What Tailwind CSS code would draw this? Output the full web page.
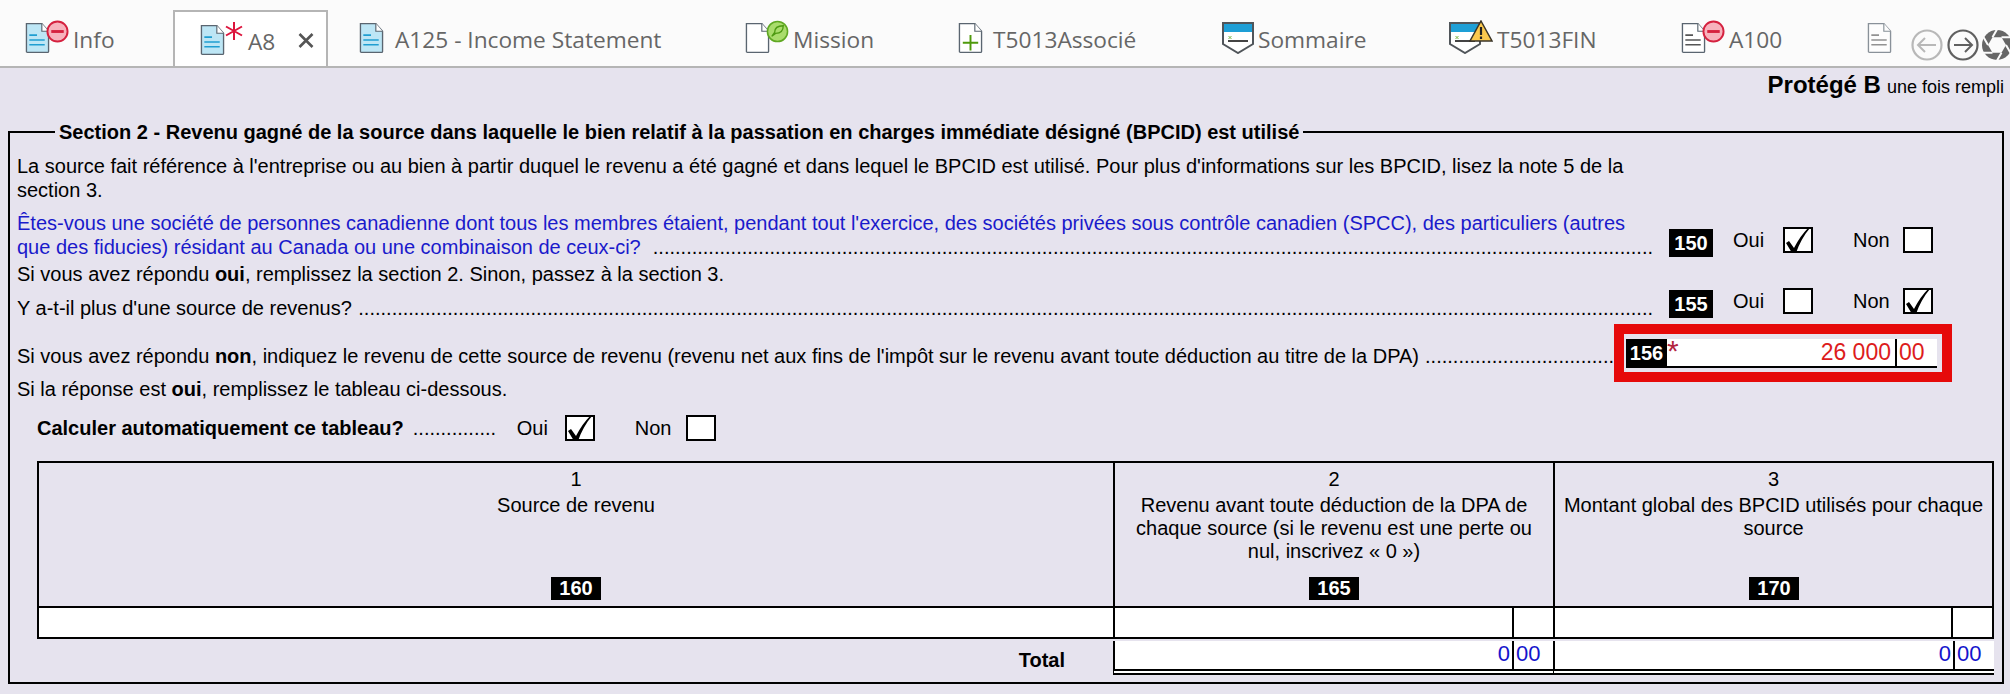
<!DOCTYPE html>
<html lang="fr">
<head>
  <meta charset="UTF-8" />
  <title>A8</title>
  <script src="https://cdn.jsdelivr.net/npm/@tailwindcss/browser@4"></script>
</head>
<body class="w-[2010px] h-[694px] overflow-hidden bg-[#e6e3ee] text-black font-['Liberation_Sans',Arial,sans-serif] text-[20px] leading-[24px]">

  <svg class="hidden">
    <defs>
      <symbol id="doc" viewBox="0 0 26 32">
        <path d="M1.5 1h16l7 8v21a1 1 0 0 1-1 1h-21a1 1 0 0 1-1-1z" fill="currentColor" stroke="#5a6570" stroke-width="1.4"/>
        <path d="M17.5 1v8h7" fill="#fff" stroke="#5a6570" stroke-width="1.2"/>
      </symbol>
      <symbol id="lines" viewBox="0 0 26 32">
        <path d="M4.500 13h8M4.500 18h16M4.500 23h16" fill="none" stroke="currentColor" stroke-width="1.600"/>
      </symbol>
      <symbol id="stop" viewBox="0 0 24 24">
        <circle cx="12" cy="12" r="10.500" fill="#f7b2bd" stroke="#d5213f" stroke-width="2"/>
        <rect x="5.500" y="10.500" width="13" height="3" fill="#d5213f"/>
      </symbol>
      <symbol id="shield" viewBox="0 0 32 32">
        <path d="M1 1h30v21l-15 9-15-9z" fill="#fff" stroke="#50555a" stroke-width="2"/>
        <rect x="2" y="2" width="28" height="8" fill="#1e9fd6"/>
        <path d="M6 19h20" stroke="#444" stroke-width="2"/>
        <path d="M6.500 14l3 3M9.500 14l-3 3" stroke="#7ab648" stroke-width="1"/>
      </symbol>
      <symbol id="check" viewBox="0 0 30 26">
        <path d="M3 16l3-2 5 7C15 13 20 6 26 0l1 1C21 8 16 17 13 26H9z" fill="#000"/>
      </symbol>
    </defs>
  </svg>

  <!-- Tabs -->
  <header class="h-[68px] flex items-stretch bg-[#fbfbfb] border-b-2 border-[#b5b5b5] font-['Open_Sans',sans-serif] text-[22.7px] text-[#666] relative overflow-hidden">
    <div class="w-[173px] pl-[25px] flex items-center pt-[10px]">
      <span class="relative w-[25px] h-[32px] block">
        <svg class="w-[25px] h-[32px] text-[#bde6f5] absolute"><use href="#doc"/></svg>
        <svg class="w-[25px] h-[32px] text-[#1f9ed1] absolute"><use href="#lines"/></svg>
        <svg class="w-[23px] h-[23px] absolute left-[21px] top-[-2px]"><use href="#stop"/></svg>
      </span>
      <span class="ml-[23px] pt-[3px]">Info</span>
    </div>
    <div class="w-[155px] h-[58px] mt-[10px] mb-[-2px] pl-[25px] flex items-center bg-white border-2 border-b-0 border-[#b5b5b5] z-10">
      <span class="relative w-[25px] h-[32px] block">
        <svg class="w-[25px] h-[32px] text-[#bde6f5] absolute"><use href="#doc"/></svg>
        <svg class="w-[25px] h-[32px] text-[#1f9ed1] absolute"><use href="#lines"/></svg>
        <svg class="w-[18px] h-[18px] absolute left-[25px] top-[-2px]" viewBox="0 0 18 18"><path d="M9 0v18M1 4.500l16 9M17 4.500l-16 9" stroke="#dc143c" stroke-width="2"/></svg>
      </span>
      <span class="ml-[23px] pt-[3px]">A8</span>
      <svg class="w-[16px] h-[15px] ml-[23px]" viewBox="0 0 16 15"><path d="M1.500 1l13 13M14.500 1l-13 13" stroke="#555" stroke-width="2.600"/></svg>
    </div>
    <div class="w-[386px] pl-[31px] flex items-center pt-[10px]">
      <span class="relative w-[25px] h-[32px] block">
        <svg class="w-[25px] h-[32px] text-[#bde6f5] absolute"><use href="#doc"/></svg>
        <svg class="w-[25px] h-[32px] text-[#1f9ed1] absolute"><use href="#lines"/></svg>
      </span>
      <span class="ml-[11px] pt-[3px]">A125 - Income Statement</span>
    </div>
    <div class="w-[244px] pl-[31px] flex items-center pt-[10px]">
      <span class="relative w-[25px] h-[32px] block">
        <svg class="w-[25px] h-[32px] text-white absolute"><use href="#doc"/></svg>
        <svg class="w-[23px] h-[23px] absolute left-[21px] top-[-2px]" viewBox="0 0 24 24">
          <circle cx="12" cy="12" r="10.500" fill="#a9dc6c" stroke="#5fa822" stroke-width="1.600"/>
          <path d="M6 17l4-3c5 0 8-3 8-8-5 0-9 2-9 7l-3 4z" fill="none" stroke="#4d9a12" stroke-width="1.400"/>
        </svg>
      </span>
      <span class="ml-[23px] pt-[3px]">Mission</span>
    </div>
    <div class="w-[264px] flex items-center pt-[10px]">
      <span class="relative w-[25px] h-[32px] block">
        <svg class="w-[25px] h-[32px] text-white absolute"><use href="#doc"/></svg>
        <svg class="w-[25px] h-[32px] absolute" viewBox="0 0 26 32"><path d="M13 13v16M5 21h16" stroke="#4f9a0c" stroke-width="2"/></svg>
      </span>
      <span class="ml-[10px] pt-[3px]">T5013Associé</span>
    </div>
    <div class="w-[227px] flex items-center pt-[10px]">
      <svg class="w-[32px] h-[32px]"><use href="#shield"/></svg>
      <span class="ml-[4px] pt-[3px]">Sommaire</span>
    </div>
    <div class="w-[232px] flex items-center pt-[10px]">
      <span class="relative w-[32px] h-[32px] block">
        <svg class="w-[32px] h-[32px] absolute"><use href="#shield"/></svg>
        <svg class="w-[24px] h-[22px] absolute left-[20px] top-[-2px]" viewBox="0 0 24 22"><path d="M12 1l11 20H1z" fill="#fbc94e" stroke="#3a3428" stroke-width="1.500"/><path d="M12 7v8M12 16.500v2.500" stroke="#222" stroke-width="2.200"/></svg>
      </span>
      <span class="ml-[16px] pt-[3px]">T5013FIN</span>
    </div>
    <div class="w-[186px] flex items-center pt-[10px]">
      <span class="relative w-[25px] h-[32px] block">
        <svg class="w-[25px] h-[32px] text-white absolute"><use href="#doc"/></svg>
        <svg class="w-[25px] h-[32px] text-[#555] absolute"><use href="#lines"/></svg>
        <svg class="w-[23px] h-[23px] absolute left-[21px] top-[-2px]"><use href="#stop"/></svg>
      </span>
      <span class="ml-[23px] pt-[3px]">A100</span>
    </div>
    <div class="flex items-center pt-[10px]">
      <span class="relative w-[25px] h-[32px] block opacity-70">
        <svg class="w-[25px] h-[32px] text-white absolute"><use href="#doc"/></svg>
        <svg class="w-[25px] h-[32px] text-[#666] absolute"><use href="#lines"/></svg>
      </span>
    </div>
    <!-- scroll buttons -->
    <div class="absolute left-[1911px] top-[29px] flex items-center gap-[4px]">
      <svg class="w-[32px] h-[32px]" viewBox="0 0 32 32"><circle cx="16" cy="16" r="14.500" fill="none" stroke="#b8b8b8" stroke-width="2.200"/><path d="M25 16H8M14 9l-7 7 7 7" fill="none" stroke="#b8b8b8" stroke-width="2"/></svg>
      <svg class="w-[32px] h-[32px]" viewBox="0 0 32 32"><circle cx="16" cy="16" r="14.500" fill="none" stroke="#606060" stroke-width="2.200"/><path d="M7 16h17M18 9l7 7-7 7" fill="none" stroke="#606060" stroke-width="2"/></svg>
      <svg class="w-[32px] h-[32px] -ml-[2px] shrink-0" viewBox="0 0 32 32">
        <circle cx="16" cy="16" r="15" fill="#666"/>
        <path d="M25 16l6.750 11.700M20.500 23.800l-6.750 11.700M11.500 23.800H-2M7 16L.25 4.300M11.500 8.200l6.750-11.700M20.500 8.200H34" stroke="#fbfbfb" stroke-width="2" fill="none"/>
        <path d="M25 16l-4.500 7.800h-9L7 16l4.500-7.800h9z" fill="#fbfbfb"/>
      </svg>
    </div>
  </header>

  <main>
    <div class="h-[53px] pr-[6px] pt-[5px] flex justify-end items-baseline gap-[6px]">
      <span class="text-[24px] font-bold">Protégé B</span>
      <span class="text-[18px]">une fois rempli</span>
    </div>

    <fieldset class="ml-[8px] w-[1996px] h-[563px] border-2 border-black px-[7px] pt-[11px]">
      <legend class="ml-[38px] px-[4px] font-bold leading-[22px]">Section 2 - Revenu gagné de la source dans laquelle le bien relatif à la passation en charges immédiate désigné (BPCID) est utilisé</legend>

      <p>La source fait référence à l'entreprise ou au bien à partir duquel le revenu a été gagné et dans lequel le BPCID est utilisé. Pour plus d'informations sur les BPCID, lisez la note 5 de la<br>section 3.</p>

      <div class="mt-[9px] flex">
        <div class="w-[1636px] text-[#1a1acb]">
          <p class="whitespace-nowrap">Êtes-vous une société de personnes canadienne dont tous les membres étaient, pendant tout l'exercice, des sociétés privées sous contrôle canadien (SPCC), des particuliers (autres</p>
          <div class="flex justify-between whitespace-nowrap"><span>que des fiducies) résidant au Canada ou une combinaison de ceux-ci?</span><span class="text-black">....................................................................................................................................................................................</span></div>
        </div>
        <div class="ml-[16px] mt-[18px] flex items-center h-[28px]">
          <span class="w-[44px] h-[28px] bg-black text-white font-bold flex items-center justify-center">150</span>
          <span class="ml-[20px] w-[50px] mb-[6px]">Oui</span>
          <span class="w-[30px] h-[26px] mb-[6px] border-2 border-black bg-white block relative"><svg class="w-[30px] h-[26px] absolute -left-[2px] -top-[2px]"><use href="#check"/></svg></span>
          <span class="ml-[40px] w-[50px] mb-[6px]">Non</span>
          <span class="w-[30px] h-[26px] mb-[6px] border-2 border-black bg-white block"></span>
        </div>
      </div>

      <p class="mt-[3px]">Si vous avez répondu <b>oui</b>, remplissez la section 2. Sinon, passez à la section 3.</p>

      <div class="mt-[5px] flex h-[28px]">
        <div class="w-[1636px] flex justify-between whitespace-nowrap pt-[5px]"><span>Y a-t-il plus d'une source de revenus?</span><span>.........................................................................................................................................................................................................................................</span></div>
        <div class="ml-[16px] -mt-[1px] flex items-center h-[28px]">
          <span class="w-[44px] h-[28px] bg-black text-white font-bold flex items-center justify-center">155</span>
          <span class="ml-[20px] w-[50px] mb-[6px]">Oui</span>
          <span class="w-[30px] h-[26px] mb-[6px] border-2 border-black bg-white block"></span>
          <span class="ml-[40px] w-[50px] mb-[6px]">Non</span>
          <span class="w-[30px] h-[26px] mb-[6px] border-2 border-black bg-white block relative"><svg class="w-[30px] h-[26px] absolute -left-[2px] -top-[2px]"><use href="#check"/></svg></span>
        </div>
      </div>

      <div class="mt-[5px] flex h-[58px]">
        <div class="w-[1597px] flex justify-between whitespace-nowrap pt-[20px]"><span>Si vous avez répondu <b>non</b>, indiquez le revenu de cette source de revenu (revenu net aux fins de l'impôt sur le revenu avant toute déduction au titre de la DPA)</span><span>..................................</span></div>
        <div class="w-[338px] h-[58px] border-[10px] border-[#e60a0a] pl-[2px] pt-[5px]">
          <div class="w-[311px] h-[29px] bg-white border-b-2 border-black flex items-end relative">
            <span class="w-[41px] h-[27px] bg-black text-white font-bold flex items-center justify-center">156</span>
            <span class="absolute left-[41px] top-[-3px] text-[#b2243f] text-[30px] leading-[30px]">*</span>
            <span class="w-[228px] text-right text-[23px] leading-[27px] text-[#dd1c1c] pr-[4px]">26 000</span>
            <span class="h-[27px] border-l-2 border-black pl-[2px] text-[23px] leading-[27px] text-[#dd1c1c]">00</span>
          </div>
        </div>
      </div>

      <p class="mt-[-5px]">Si la réponse est <b>oui</b>, remplissez le tableau ci-dessous.</p>

      <div class="mt-[13px] ml-[20px] flex items-center h-[28px]">
        <b>Calculer automatiquement ce tableau?</b>
        <span class="ml-[9px] w-[84px] whitespace-nowrap">...............</span>
        <span class="ml-[20px] w-[48px]">Oui</span>
        <span class="w-[30px] h-[26px] border-2 border-black bg-white block relative"><svg class="w-[30px] h-[26px] absolute -left-[2px] -top-[2px]"><use href="#check"/></svg></span>
        <span class="ml-[40px] w-[51px]">Non</span>
        <span class="w-[30px] h-[26px] border-2 border-black bg-white block"></span>
      </div>

      <!-- Table -->
      <div class="mt-[19px] ml-[20px] w-[1957px]">
        <div class="border-2 border-black">
          <div class="grid grid-cols-[1074px_440px_1fr] h-[143px] text-center leading-[23px]">
            <div class="relative pt-[5px]">1<br><div class="mt-[3px]">Source de revenu</div>
              <span class="absolute left-[512px] top-[114px] w-[50px] h-[23px] bg-black text-white font-bold flex items-center justify-center">160</span>
            </div>
            <div class="relative border-l-2 border-black pt-[5px] px-[18px]">2<br><div class="mt-[3px]">Revenu avant toute déduction de la DPA de chaque source (si le revenu est une perte ou nul, inscrivez « 0 »)</div>
              <span class="absolute left-[194px] top-[114px] w-[50px] h-[23px] bg-black text-white font-bold flex items-center justify-center">165</span>
            </div>
            <div class="relative border-l-2 border-black pt-[5px] px-[6px]">3<br><div class="mt-[3px]">Montant global des BPCID utilisés pour chaque source</div>
              <span class="absolute left-[194px] top-[114px] w-[50px] h-[23px] bg-black text-white font-bold flex items-center justify-center">170</span>
            </div>
          </div>
          <div class="grid grid-cols-[1074px_440px_1fr] h-[31px] bg-white border-t-2 border-black">
            <div></div>
            <div class="border-l-2 border-black flex justify-end"><span class="w-[41px] border-l-2 border-black"></span></div>
            <div class="border-l-2 border-black flex justify-end"><span class="w-[41px] border-l-2 border-black"></span></div>
          </div>
        </div>
        <div class="grid grid-cols-[1076px_440px_1fr] mt-[2px] h-[34px]">
          <div class="text-right pr-[48px] pt-[7px] font-bold">Total</div>
          <div class="border-l-2 border-black bg-white border-b-[6px] border-double border-b-black flex justify-end pt-[1px] text-[#1414cc] text-[22px]"><span class="pr-[2px]">0</span><span class="w-[41px] -mt-[1px] pt-[1px] border-l-2 border-black pl-[2px]">00</span></div>
          <div class="border-l-2 border-black bg-white border-b-[6px] border-double border-b-black flex justify-end pt-[1px] text-[#1414cc] text-[22px]"><span class="pr-[2px]">0</span><span class="w-[41px] -mt-[1px] pt-[1px] border-l-2 border-black pl-[2px]">00</span></div>
        </div>
      </div>
    </fieldset>
  </main>
</body>
</html>
